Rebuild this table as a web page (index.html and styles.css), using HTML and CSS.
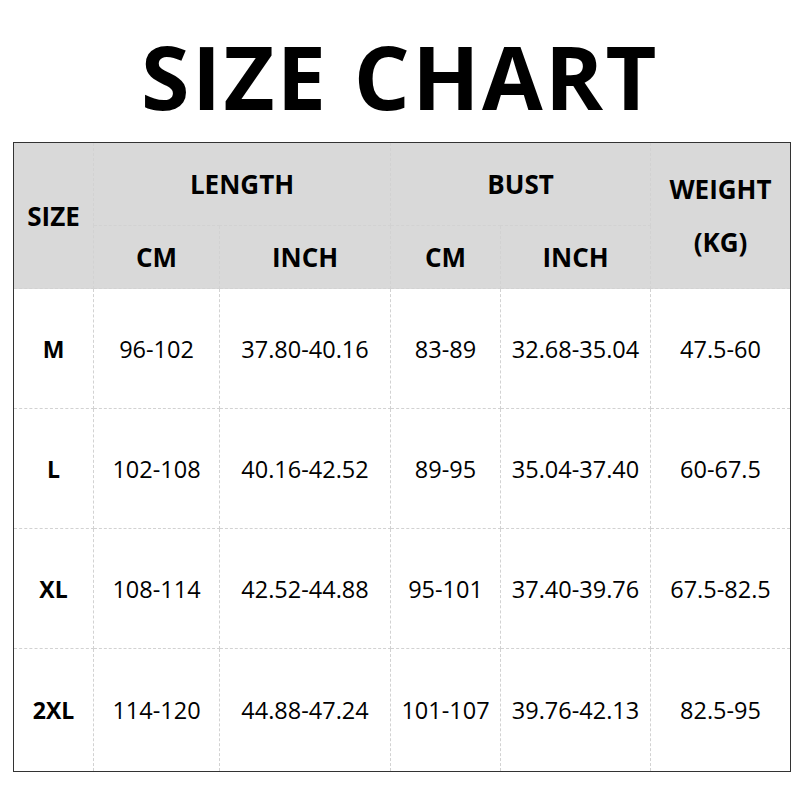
FILE: index.html
```html
<!DOCTYPE html>
<html>
<head>
<meta charset="utf-8">
<link rel="stylesheet" href="styles.css">
</head>
<body>
<h1 class="title">SIZE CHART</h1>
<table class="chart">
  <colgroup>
    <col class="c1"><col class="c2"><col class="c3"><col class="c4"><col class="c5"><col class="c6">
  </colgroup>
  <thead>
    <tr class="h1">
      <th rowspan="2">SIZE</th>
      <th colspan="2">LENGTH</th>
      <th colspan="2">BUST</th>
      <th rowspan="2" class="weight">WEIGHT<br>(KG)</th>
    </tr>
    <tr class="h2">
      <th>CM</th><th>INCH</th><th>CM</th><th>INCH</th>
    </tr>
  </thead>
  <tbody>
    <tr><th>M</th><td>96-102</td><td>37.80-40.16</td><td>83-89</td><td>32.68-35.04</td><td>47.5-60</td></tr>
    <tr><th>L</th><td>102-108</td><td>40.16-42.52</td><td>89-95</td><td>35.04-37.40</td><td>60-67.5</td></tr>
    <tr><th>XL</th><td>108-114</td><td>42.52-44.88</td><td>95-101</td><td>37.40-39.76</td><td>67.5-82.5</td></tr>
    <tr class="last"><th>2XL</th><td>114-120</td><td>44.88-47.24</td><td>101-107</td><td>39.76-42.13</td><td>82.5-95</td></tr>
  </tbody>
</table>
</body>
</html>
```

FILE: styles.css
```css
html, body {
  margin: 0;
  padding: 0;
  background: #fff;
}
body {
  width: 800px;
  height: 800px;
  font-family: "Open Sans", "Noto Sans", sans-serif;
  color: #000;
}
.title {
  margin: 0;
  padding-top: 26px;
  height: 142px;
  box-sizing: border-box;
  text-align: center;
  font-size: 88px;
  line-height: 100px;
  font-weight: 700;
  letter-spacing: 2.4px;
}
.chart {
  margin-left: 13px;
  width: 777px;
  border-collapse: collapse;
  table-layout: fixed;
  border: 1px solid #333;
}
.c1 { width: 80px; }
.c2 { width: 126px; }
.c3 { width: 171px; }
.c4 { width: 110px; }
.c5 { width: 150px; }
.c6 { width: 140px; }
.chart th, .chart td {
  border: 1px dashed #d2d2d2;
  text-align: center;
  vertical-align: middle;
  padding: 0;
}
.chart thead th {
  background: #d9d9d9;
  font-size: 26px;
  font-weight: 700;
}
.h1 { height: 83px; }
.h2 { height: 63px; }
.weight { line-height: 53px; }
.chart tbody tr { height: 120px; }
.chart tbody tr.last { height: 123px; }
.chart tbody th {
  font-size: 23px;
  font-weight: 700;
}
.chart tbody td {
  font-size: 23.5px;
  font-weight: 400;
}
```
